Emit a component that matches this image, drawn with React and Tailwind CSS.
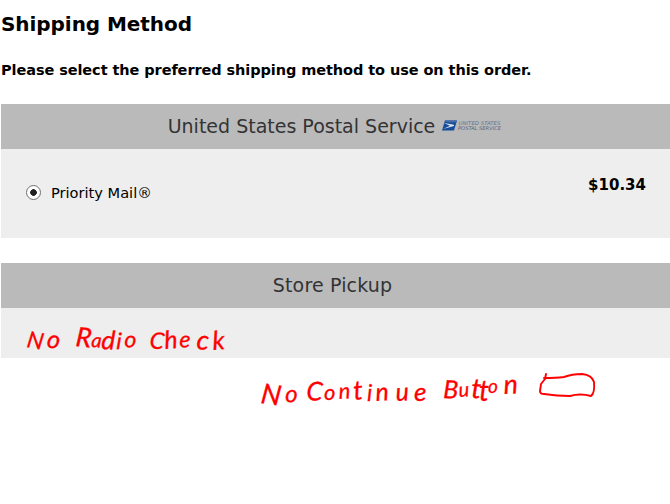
function CarrierLogo() {
  return (
    <svg className="mb-0.5 ml-[7px] h-[13px] w-[61px] shrink-0" viewBox="0 -0.5 61 13" aria-label="United States Postal Service">
      <path d="M3 1H15L12 11H0Z" fill="#174c98" />
      <path d="M3 1H15L14.3 3H9Q6 3 2.5 2Z" fill="#446baa" />
      <path d="M2 3.5L11 5Q12.5 5.2 12 6.5L1 9.5L8 6.2Z" fill="#dce3ed" />
      <text x="16.5" y="5.4" fontSize="5.2" fontStyle="italic" textLength="42" lengthAdjust="spacingAndGlyphs" fill="#66728c">UNITED STATES</text>
      <text x="16" y="10.6" fontSize="5.2" fontStyle="italic" textLength="43" lengthAdjust="spacingAndGlyphs" fill="#56647f">POSTAL SERVICE</text>
    </svg>
  );
}

function Section({ title, logo, className, titleClassName, children }) {
  return (
    <section className={className}>
      <h2 className="flex h-[45px] items-center justify-center bg-[#bababa] text-[19px] leading-none text-[#333333]">
        <span className={titleClassName}>{title}</span>
        {logo}
      </h2>
      {children}
    </section>
  );
}

function Annotations() {
  return (
    <svg
      className="pointer-events-none absolute left-0 top-0 h-[504px] w-[670px] font-['Lato','Liberation_Sans',sans-serif]"
      viewBox="0 0 670 504"
      fill="#ff0000"
      stroke="#ff0000"
      strokeWidth="0.3"
      fontSize="23"
      fontStyle="italic"
    >
      <text x="26 46" y="347 347" rotate="10 10"><tspan>N</tspan><tspan fontSize="25">o</tspan></text>
      <text x="75 91 101 116 124" y="346 347 349 349 347" rotate="6 4 3 3 4"><tspan fontSize="27">R</tspan><tspan fontSize="20">a</tspan><tspan fontSize="26">d</tspan>io</text>
      <text x="149 165 179 196 213" y="348 349 347 349 350" rotate="6 -5 4 5 -4"><tspan>C</tspan><tspan fontSize="25">h</tspan><tspan>e</tspan><tspan fontSize="27">c</tspan><tspan fontSize="26">k</tspan></text>
      <text x="260 285" y="403 402" rotate="8 2"><tspan fontSize="28">N</tspan><tspan fontSize="24">o</tspan></text>
      <text x="306 324 339 354 367 376 396 414" y="400 400 399 400 401 401 401 401" rotate="3 0 -3 -5 0 -4 -3 0"><tspan fontSize="26">C</tspan><tspan fontSize="22">o</tspan><tspan fontSize="22">n</tspan><tspan fontSize="27">t</tspan><tspan>i</tspan><tspan fontSize="25">n</tspan><tspan fontSize="25">u</tspan><tspan fontSize="26">e</tspan></text>
      <text x="443 459 471 479 488 504" y="398 397 398 401 393 394" rotate="2 -4 2 0 0 -3"><tspan fontSize="25">B</tspan><tspan fontSize="20">u</tspan><tspan fontSize="28">tt</tspan><tspan fontSize="19">o</tspan><tspan fontSize="27">n</tspan></text>
      <path d="M546 374L545 379L541 384L540 391Q540 394 544 394Q557 396 570 396Q580 393 591 396Q595 393 594 382Q592 375 582 374Q572 374 564 377Q556 378 544 378" fill="none" strokeWidth="1.9" strokeLinecap="round" strokeLinejoin="round" />
    </svg>
  );
}

export default function App() {
  return (
    <main className="relative h-[504px] w-[670px] overflow-hidden bg-white pl-px font-['DejaVu_Sans',sans-serif] text-black">
      <h1 className="pt-3 text-[20px] font-bold leading-6 tracking-[-0.06px]">Shipping Method</h1>
      <p className="mt-6 text-[14.5px] font-bold leading-5 tracking-[-0.08px]">
        Please select the preferred shipping method to use on this order.
      </p>
      <Section className="mt-6" title="United States Postal Service" logo={<CarrierLogo />}>
        <div className="flex h-[89px] items-start justify-between bg-[#eeeeee] pl-[25px] pr-6">
          <label className="mt-[32px] flex items-center text-[14.6px] leading-5">
            <input
              type="radio"
              name="shipping"
              defaultChecked
              className="mr-2.5 size-[15px] appearance-none rounded-full border-[1.5px] border-[#707070] bg-white bg-[radial-gradient(circle,#222222_0_3px,transparent_3.6px)]"
            />
            <span className="pt-0.5">Priority Mail®</span>
          </label>
          <span className="mt-[26px] text-[15px] font-bold leading-5">$10.34</span>
        </div>
      </Section>
      <Section className="mt-[25px]" title="Store Pickup" titleClassName="mr-[6px] tracking-[0.15px]">
        <div className="h-[50px] bg-[#eeeeee]" />
      </Section>
      <Annotations />
    </main>
  );
}
